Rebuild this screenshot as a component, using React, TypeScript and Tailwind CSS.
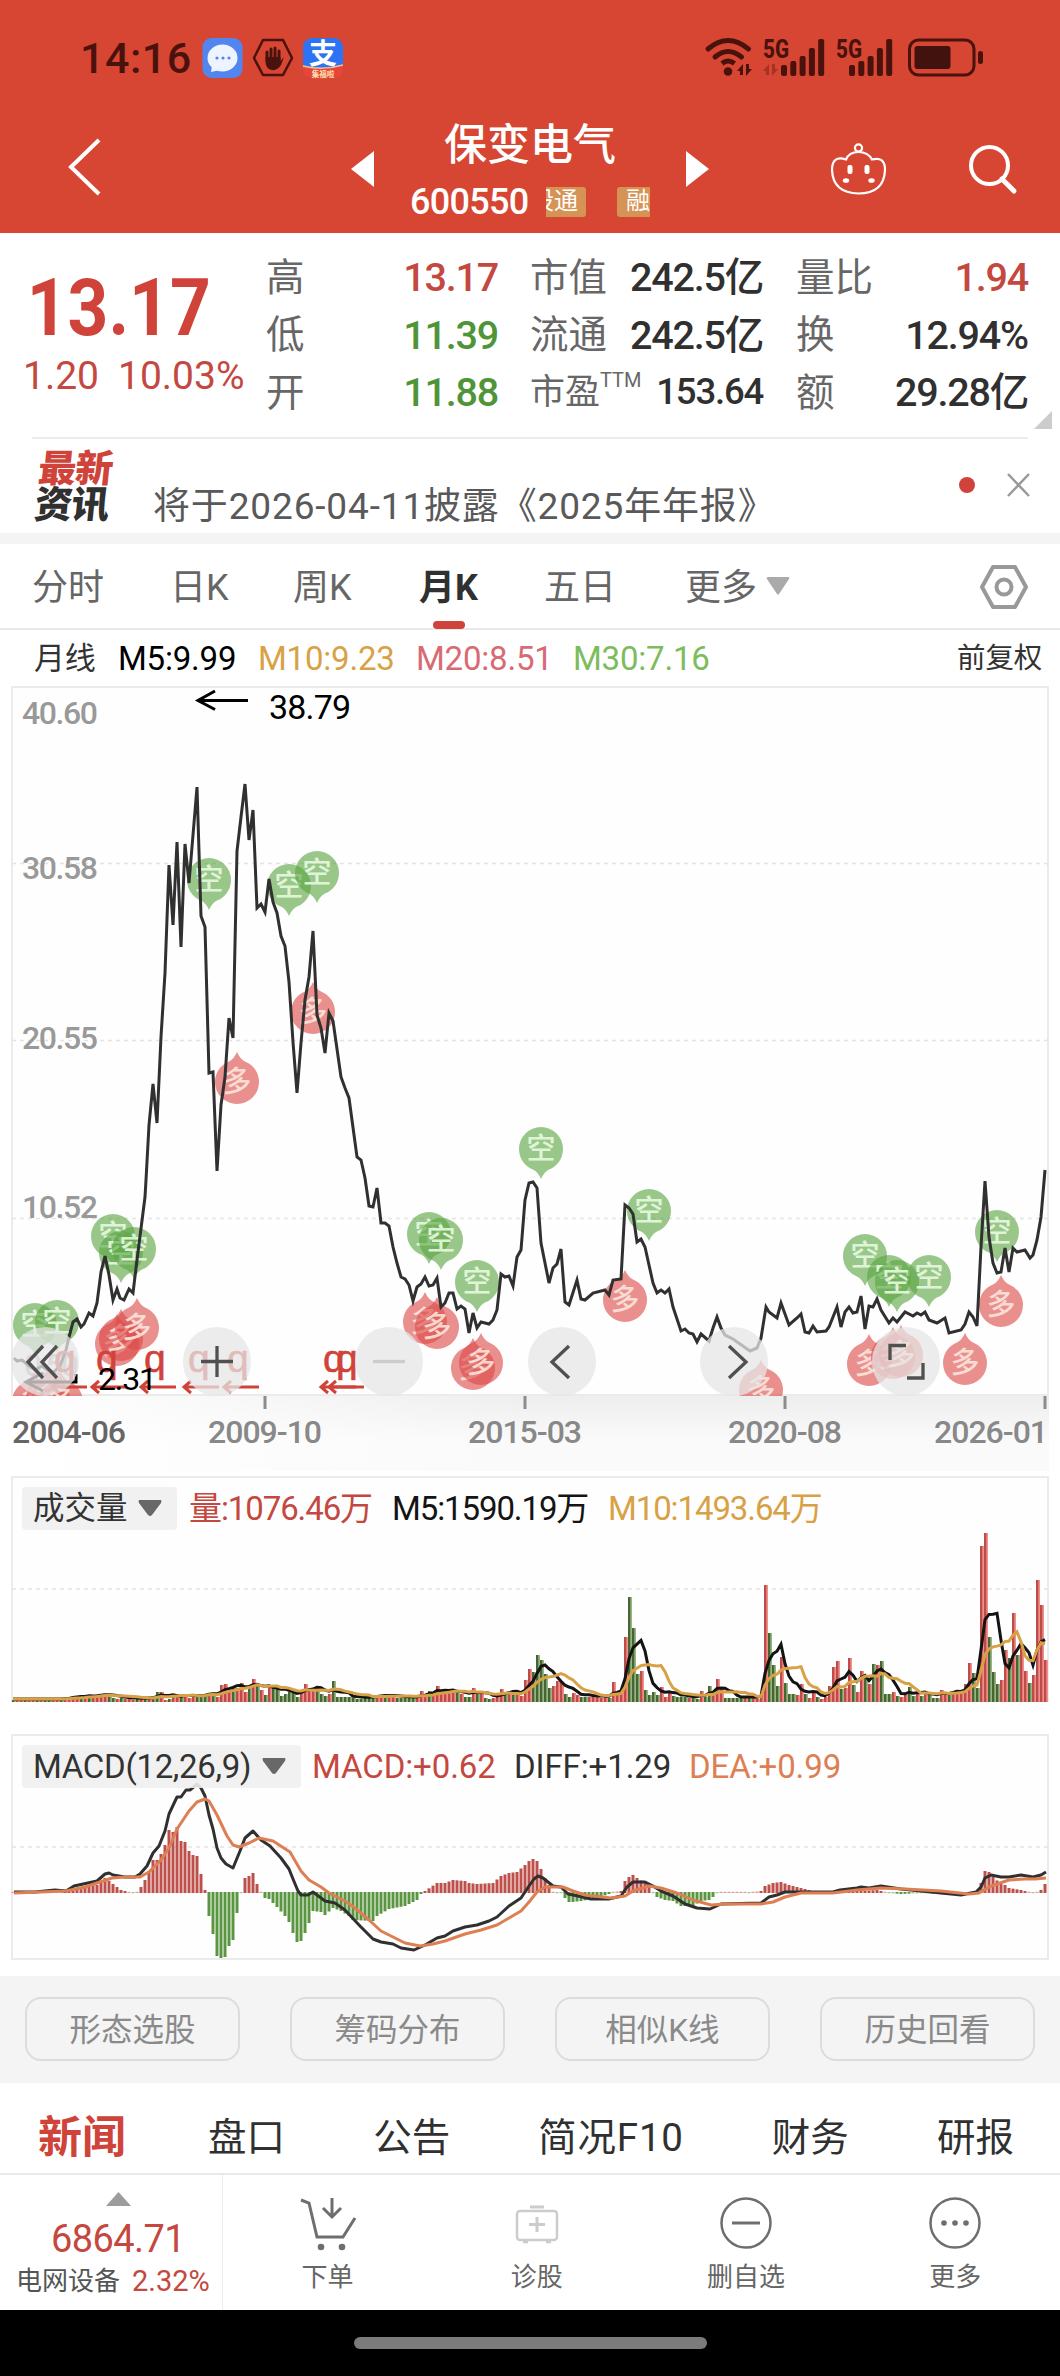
import { ReactNode } from "react"

type Point = [number, number]

// one month every 4px, the first one sits at x = 13
const monthX = (i: number) => 13 + i * 4

const toPoints = (list: number[]) => {
    const out: string[] = []
    for (let i = 0; i < list.length; i += 2) out.push(`${list[i]},${list[i + 1]}`)
    return out.join(" ")
}

const price = [
    14, 1358, 17, 1361, 22, 1360, 29, 1366, 35, 1370, 42, 1366, 47, 1370, 54, 1372, 60, 1366, 66, 1350, 69, 1337, 73, 1322, 77, 1319,
    81, 1327, 84, 1324, 89, 1313, 93, 1316, 97, 1303, 101, 1272, 105, 1256, 109, 1275, 113, 1300, 117, 1289, 120, 1298, 124, 1300,
    129, 1289, 133, 1293, 137, 1260, 145, 1197, 146, 1180, 149, 1125, 153, 1084, 157, 1123, 161, 1037, 165, 973, 169, 865, 173, 925,
    177, 842, 181, 947, 185, 844, 189, 883, 197, 787, 201, 916, 205, 927, 209, 1073, 213, 1072, 217, 1171, 221, 1105, 225, 1077,
    229, 1018, 233, 1038, 237, 851, 241, 817, 245, 784, 249, 840, 253, 810, 257, 908, 261, 904, 265, 912, 269, 879, 273, 902,
    277, 913, 281, 936, 285, 946, 289, 982, 293, 1042, 297, 1093, 301, 1043, 305, 1000, 309, 977, 313, 931, 317, 1015, 321, 1028,
    325, 1053, 329, 1013, 333, 1021, 341, 1077, 345, 1088, 349, 1098, 357, 1157, 361, 1160, 365, 1178, 369, 1206, 373, 1207,
    377, 1188, 381, 1223, 385, 1223, 389, 1226, 393, 1247, 397, 1263, 401, 1277, 405, 1279, 409, 1285, 413, 1301, 417, 1287,
    421, 1284, 425, 1277, 429, 1286, 433, 1285, 437, 1278, 441, 1307, 445, 1303, 449, 1293, 453, 1293, 457, 1309, 461, 1306,
    465, 1309, 469, 1333, 473, 1313, 477, 1328, 481, 1322, 489, 1324, 493, 1320, 497, 1310, 501, 1274, 505, 1277, 509, 1276,
    513, 1286, 517, 1257, 521, 1250, 525, 1200, 529, 1183, 533, 1182, 537, 1188, 541, 1243, 549, 1283, 553, 1268, 557, 1264,
    561, 1249, 565, 1302, 569, 1305, 577, 1280, 581, 1299, 585, 1300, 593, 1293, 605, 1290, 609, 1295, 613, 1280, 621, 1279,
    625, 1205, 629, 1208, 633, 1214, 637, 1242, 641, 1239, 645, 1247, 653, 1283, 657, 1293, 661, 1290, 665, 1293, 669, 1289,
    673, 1307, 681, 1331, 685, 1329, 689, 1333, 693, 1334, 697, 1342, 701, 1334, 709, 1341, 713, 1328, 717, 1317, 721, 1328,
    725, 1335, 733, 1339, 750, 1351, 757, 1348, 761, 1338, 766, 1307, 769, 1312, 777, 1318, 781, 1303, 789, 1325, 797, 1318,
    801, 1314, 805, 1332, 809, 1333, 813, 1326, 817, 1332, 826, 1331, 829, 1327, 837, 1307, 841, 1327, 845, 1312, 849, 1307,
    853, 1313, 857, 1312, 861, 1296, 865, 1329, 869, 1306, 873, 1307, 877, 1299, 881, 1310, 889, 1323, 893, 1318, 897, 1322,
    905, 1312, 913, 1316, 917, 1313, 921, 1315, 925, 1312, 929, 1320, 937, 1323, 945, 1318, 949, 1333, 961, 1330, 965, 1324,
    969, 1312, 973, 1317, 977, 1326, 981, 1247, 985, 1181, 989, 1237, 993, 1263, 997, 1273, 1001, 1272, 1005, 1248, 1009, 1272,
    1013, 1248, 1017, 1252, 1025, 1250, 1030, 1258, 1033, 1255, 1037, 1240, 1041, 1217, 1045, 1170,
]

const shortMarks: Point[] = [
    [35, 1325], [57, 1322], [113, 1236], [121, 1253], [134, 1249], [209, 880], [289, 886], [317, 873], [429, 1234], [441, 1240],
    [477, 1282], [541, 1149], [649, 1211], [865, 1256], [889, 1277], [897, 1282], [929, 1277], [997, 1232],
]

const longMarks: Point[] = [
    [34, 1402], [48, 1399], [61, 1402], [117, 1344], [121, 1339], [137, 1328], [237, 1082], [313, 1012], [425, 1322], [437, 1327],
    [473, 1368], [481, 1363], [625, 1300], [761, 1390], [869, 1364], [893, 1357], [901, 1355], [965, 1363], [1001, 1305],
]

const dividendMarks: Point[] = [[56, 51], [98, 91], [146, 140], [190, 183], [229, 223], [325, 320], [338, 328]]

// positive = up month, negative = down month
const volume = [
    -2, 2, 2, -2, 2, 2, -2, 2, -2, -2, 2, 2, -2, 4, 3, 6, 5, -4, 5, -6, 5, 6, 7, 7, -6, -4, 3, -4, 3, 3, 2, -3, 3, -4, 3,
    -3, -10, 10, 2, -3, 6, 6, -7, 5, 4, 6, -5, -8, -6, 9, -8, 5, 17, 18, 14, -14, 14, 19, 10, -15, 23, -17, 12, -7, 17, -15, -14,
    -6, -8, -10, -9, -5, 10, 18, 14, 13, -14, -8, -6, 8, -21, -5, -5, -5, -5, -4, -3, -3, -4, -5, -5, 5, 6, -6, 6, 5, -4, -4, -4,
    -4, -4, 4, 11, 6, -11, 8, 16, 10, 9, 9, 11, -10, 8, -5, -5, 14, -10, 8, -4, -3, 4, 6, 13, -10, 9, -9, 8, 6, 22, 33, -30,
    -47, -42, -28, -14, 16, 21, 20, -8, -5, 9, 7, -5, -5, 5, 6, 5, 4, 5, -4, 20, 10, 12, 65, -105, -74, -28, 31, -12, -7, -10,
    -7, 15, 5, 9, -6, -5, -5, -5, 4, -4, -3, 11, -5, -16, 8, 23, 13, -4, -4, -4, -4, -4, 4, -4, 4, 3, 10, 117, -69, -37, -16, 45,
    -19, -8, -8, 7, 18, -8, 4, 10, -5, 3, 5, 16, 35, 41, -13, 14, 44, -17, 10, 31, -26, 18, -38, 37, -41, -8, -8, 10, -6, 5, 7,
    -15, -6, 8, -6, 10, -7, -4, -4, 12, 10, -8, 9, 10, 11, 18, 39, -29, -14, 156, 169, -65, -30, -18, 22, 52, -44, 89, -47, 55,
    31, -19, 27, 122, 97, 42,
]

const average = (span: number) =>
    volume
        .map((_, i) => {
            const part = volume.slice(Math.max(0, i - span + 1), i + 1)
            const mean = part.reduce((sum, v) => sum + Math.abs(v), 0) / part.length
            return `${monthX(i)},${(1701 - mean).toFixed(1)}`
        })
        .join(" ")

const diff = [
    14, 1892, 35, 1892, 55, 1890, 66, 1891, 74, 1886, 97, 1881, 105, 1874, 109, 1873, 113, 1875, 125, 1877, 135, 1877, 140, 1874,
    147, 1866, 153, 1853, 159, 1846, 165, 1831, 169, 1814, 177, 1797, 181, 1797, 186, 1790, 190, 1790, 197, 1784, 201, 1788,
    205, 1796, 209, 1815, 213, 1829, 217, 1848, 221, 1858, 226, 1864, 233, 1868, 240, 1851, 245, 1838, 253, 1831, 261, 1840,
    270, 1846, 281, 1858, 289, 1869, 293, 1879, 298, 1891, 301, 1895, 308, 1895, 313, 1892, 325, 1901, 335, 1903, 345, 1910,
    360, 1926, 373, 1939, 381, 1942, 393, 1944, 401, 1948, 414, 1950, 425, 1945, 437, 1938, 445, 1936, 453, 1931, 465, 1927,
    477, 1925, 489, 1921, 497, 1917, 509, 1906, 521, 1898, 529, 1886, 534, 1879, 538, 1876, 543, 1878, 553, 1886, 561, 1887,
    568, 1894, 578, 1896, 591, 1899, 609, 1899, 621, 1896, 627, 1887, 633, 1882, 645, 1882, 653, 1886, 661, 1891, 673, 1896,
    685, 1904, 697, 1908, 710, 1909, 721, 1904, 761, 1903, 769, 1897, 777, 1895, 785, 1892, 809, 1892, 833, 1892, 840, 1890,
    857, 1888, 861, 1887, 869, 1888, 881, 1886, 901, 1889, 921, 1891, 941, 1893, 961, 1895, 976, 1892, 981, 1887, 985, 1878,
    991, 1875, 1001, 1877, 1009, 1877, 1021, 1875, 1033, 1877, 1041, 1875, 1046, 1872,
]

const dea = [
    14, 1893, 40, 1892, 66, 1891, 85, 1887, 97, 1883, 112, 1878, 125, 1877, 140, 1877, 149, 1872, 161, 1860, 169, 1848, 177, 1829,
    189, 1811, 197, 1802, 205, 1799, 209, 1801, 217, 1815, 227, 1836, 233, 1845, 239, 1847, 249, 1843, 259, 1838, 273, 1841,
    290, 1852, 301, 1871, 309, 1880, 321, 1887, 329, 1893, 345, 1901, 355, 1908, 369, 1920, 381, 1931, 393, 1937, 405, 1943,
    420, 1946, 433, 1944, 445, 1941, 465, 1934, 481, 1930, 497, 1925, 509, 1918, 521, 1911, 529, 1902, 537, 1892, 545, 1887,
    563, 1887, 573, 1891, 585, 1895, 611, 1898, 625, 1896, 633, 1891, 649, 1886, 661, 1888, 677, 1893, 693, 1900, 711, 1905,
    725, 1904, 761, 1904, 773, 1902, 785, 1897, 801, 1893, 833, 1893, 857, 1890, 881, 1888, 905, 1889, 941, 1891, 969, 1894,
    979, 1893, 989, 1887, 997, 1884, 1009, 1880, 1025, 1879, 1035, 1879, 1046, 1878,
]

// month index, bar height
const histogram = [
    0, 1, 12, 1, 16, 5, 20, 8, 21, 8, 23, 15, 25, 9, 27, 3, 29, 1, 30, -1, 31, 1, 32, 6, 33, 13, 34, 22, 35, 33, 36, 33, 37, 39,
    38, 48, 39, 63, 40, 61, 41, 66, 42, 52, 43, 51, 44, 42, 45, 38, 46, 37, 47, 19, 48, 3, 49, -24, 50, -42, 51, -64, 52, -66,
    53, -65, 54, -54, 55, -48, 56, -21, 57, -1, 58, 15, 59, 17, 60, 20, 61, 9, 62, 1, 63, -6, 64, -7, 66, -15, 68, -24, 69, -30,
    70, -41, 71, -50, 72, -49, 73, -41, 74, -31, 75, -19, 77, -20, 78, -23, 80, -16, 82, -19, 84, -24, 85, -28, 90, -29, 91, -24,
    94, -17, 98, -14, 101, -8, 102, -2, 103, 2, 106, 10, 108, 10, 110, 13, 113, 12, 114, 10, 116, 9, 120, 10, 122, 17, 124, 20,
    126, 21, 128, 28, 129, 32, 130, 34, 131, 32, 132, 24, 133, 15, 134, 8, 135, 1, 137, -1, 138, -6, 139, -10, 140, -10, 142, -9,
    145, -7, 149, -2, 150, 1, 152, 2, 153, 12, 154, 16, 155, 18, 156, 15, 158, 10, 159, 6, 160, -1, 161, -5, 163, -8, 165, -9,
    167, -14, 170, -14, 172, -9, 174, -8, 175, -5, 176, -1, 177, 1, 183, 1, 184, -1, 185, 1, 187, 2, 188, 7, 190, 10, 192, 11,
    194, 8, 197, 5, 200, 2, 212, 2, 216, 3, 218, 1, 219, -1, 222, -2, 228, -1, 235, -3, 238, -1, 239, 1, 241, 2, 242, 10, 243, 22,
    244, 21, 245, 16, 247, 9, 248, 8, 249, 5, 252, 3, 254, 1, 255, -1, 256, 1, 257, 3, 258, 9,
]

const histogramBars = (() => {
    const bars: number[] = []
    for (let k = 0; k < histogram.length - 2; k += 2) {
        const [a, ha, b, hb] = histogram.slice(k, k + 4)
        for (let i = a; i < b; i++) bars.push(ha + ((hb - ha) * (i - a)) / (b - a))
    }
    bars.push(9)
    return bars
})()

const Stat = ({ label, sup, value, tone = "text-[#303030]" }: { label: string; sup?: string; value: string; tone?: string }) => (
    <div className="flex h-[57.5px] items-center justify-between">
        <span className={`flex whitespace-nowrap text-[#676767] ${sup ? "text-[35px]" : "text-[38.500px]"}`}>
            {label}
            {sup && <sup className="top-0 mt-[3px] text-[20px] leading-none">{sup}</sup>}
        </span>
        <span className={`mr-[-1px] whitespace-nowrap font-medium tracking-[-1.2px] ${sup ? "text-[36.500px]" : "text-[39.500px]"} ${tone}`}>
            {value}
        </span>
    </div>
)

const Signal = ({ x }: { x: number }) => (
    <g>
        {[11, 15, 20, 28, 37].map((h, i) => (
            <rect key={h} x={x + i * 9.3} y={76 - h} width="6" height={h} rx="2" />
        ))}
    </g>
)

// small up / down pair beside the wifi and signal icons
const DataArrows = ({ x, opacity = 1 }: { x: number; opacity?: number }) => (
    <path d={`M${x} 71 L${x + 6} 64 V75 H${x + 3} V71z M${x + 15} 69 L${x + 9} 76 V64 H${x + 12} V69z`} fill="#4a120c" opacity={opacity} />
)

const StatusBar = () => (
    <div className="flex h-[100px] items-start pl-[80px] pt-[37px]">
        <span className="w-[122px] text-[43px] leading-[42px] font-medium tracking-[0.5px] text-[#4a120c]">14:16</span>
        <svg width="141" height="42" viewBox="202 37 141 42">
            <rect x="202.500" y="38" width="40" height="40" rx="9" fill="#5286ee" />
            <ellipse cx="222.500" cy="58" rx="15" ry="13.500" fill="#eef4ff" />
            <path d="M212 66 L211 72 L220 70z" fill="#eef4ff" />
            <g fill="#5286ee">
                <circle cx="217" cy="58" r="1.600" />
                <circle cx="223" cy="58" r="1.600" />
                <circle cx="229" cy="58" r="1.600" />
            </g>
            <path d="M263 40 H283 L292 58 L283 75 H263 L254 58z" fill="none" stroke="#4a120c" strokeWidth="2.500" strokeLinejoin="round" />
            <path
                d="M267 60 V52 M271 60 V49 M275 60 V48 M279 60 V51"
                stroke="#4a120c"
                strokeWidth="3"
                strokeLinecap="round"
            />
            <path d="M265.500 57 H280.500 V61 L284 57 L281 65 Q277 71 272 70 Q266 69 265.500 62z" fill="#4a120c" />
            <rect x="303" y="38" width="40" height="40" rx="9" fill="#2d74f4" />
            <path d="M303 66 Q323 71 343 65 V69 Q343 78 334 78 H312 Q303 78 303 69z" fill="#e8443a" />
            <path d="M303 66 Q323 71 343 65" fill="none" stroke="#f3c48c" strokeWidth="1.500" />
            <text x="323" y="64" textAnchor="middle" fontSize="28" fontWeight="700" fill="#fff">支</text>
            <text x="323" y="76.500" textAnchor="middle" fontSize="7.500" fontWeight="700" fill="#ffe3b0">集福啦</text>
        </svg>
        <svg className="ml-[359px] overflow-visible" width="290" height="42" viewBox="702 37 290 42" fill="#4a120c">
            <g fill="none" stroke="#4a120c" strokeWidth="5" strokeLinecap="round">
                <path d="M708 49 Q728 32 748.500 49" />
                <path d="M715 57 Q728 46 741.500 57" />
                <path d="M722 63.500 Q728 58.500 734.500 63.500" strokeLinecap="butt" />
            </g>
            <circle cx="728" cy="71.500" r="4.300" />
            <DataArrows x={737} />
            <DataArrows x={763} opacity={0.35} />
            <text x="763" y="57.500" fontSize="26" fontWeight="800" textLength="26" lengthAdjust="spacingAndGlyphs">5G</text>
            <Signal x={781} />
            <text x="836" y="57.500" fontSize="26" fontWeight="800" textLength="26" lengthAdjust="spacingAndGlyphs">5G</text>
            <Signal x={849} />
            <rect x="909.500" y="40" width="64.500" height="35" rx="9" fill="none" stroke="#4a120c" strokeWidth="3" />
            <rect x="914.500" y="46" width="36" height="23" rx="3" fill="#42120e" />
            <rect x="978" y="51" width="5" height="13" rx="2.500" />
        </svg>
    </div>
)

const Header = () => (
    <header className="h-[233px] bg-[#d64632] text-white">
        <StatusBar />
        <div className="flex">
            <svg className="ml-[62px] mt-[34px]" width="45" height="66" viewBox="62 134 45 66" fill="none" stroke="#fff" strokeWidth="4">
                <path d="M99 140 L71 167 L99 194" />
            </svg>
            <svg className="ml-[244px] mt-[51px]" width="23" height="36" viewBox="0 0 23 36">
                <path d="M23 0 V36 L0 18z" fill="#fff" />
            </svg>
            <div className="mt-[20px] flex w-[312px] flex-col items-center">
                <h1 className="text-[43px] leading-[50px] font-medium">保变电气</h1>
                <div className="mt-[15px] flex w-[240px] items-center justify-between">
                    <span className="text-[36px] leading-[34px] font-medium tracking-[-0.7px]">600550</span>
                    <div className="flex h-[30px] w-[104px] justify-between overflow-hidden text-[24px] leading-[29px]">
                        <span className="flex w-[40px] justify-end overflow-hidden rounded-r-[3px] bg-[#d59355] pr-[8px] whitespace-nowrap">
                            股通
                        </span>
                        <span className="w-[33px] overflow-hidden rounded-l-[3px] bg-[#d59355] pl-[9px] whitespace-nowrap">融</span>
                    </div>
                </div>
            </div>
            <svg className="mt-[51px]" width="23" height="36" viewBox="0 0 23 36">
                <path d="M0 0 V36 L23 18z" fill="#fff" />
            </svg>
            <svg className="ml-[119px] mt-[40px]" width="62" height="58" viewBox="828 140 62 58" fill="none" stroke="#fff" strokeWidth="2.200">
                <circle cx="858.500" cy="148" r="3.600" />
                <path d="M846 159.500 Q849 152 858.500 152 Q868 152 872 159.500 Q885 156 885 170 Q884 193.500 858.500 193.500 Q833 193 832 170 Q832 155 846 159.500z" />
                <g fill="#fff" stroke="none">
                    <rect x="847.500" y="165" width="5" height="9" rx="2" />
                    <rect x="864.500" y="165" width="5" height="9" rx="2" />
                    <ellipse cx="846" cy="180.500" rx="3.200" ry="2.300" />
                    <ellipse cx="871.500" cy="180.500" rx="3.200" ry="2.300" />
                </g>
            </svg>
            <svg className="ml-[74px] mt-[40px]" width="60" height="60" viewBox="964 140 60 60" fill="none" stroke="#fff" strokeWidth="4">
                <circle cx="989.500" cy="165.500" r="18.500" />
                <path d="M1002 179 L1014 191" strokeWidth="5" strokeLinecap="round" />
            </svg>
        </div>
    </header>
)

const Quote = () => (
    <section className="relative flex h-[204px]">
        <div className="w-[266px]">
            <p className="w-[210px] origin-left scale-x-[0.89] pt-[35px] pl-[30px] text-[80px] leading-[80px] font-bold text-[#d0433a]">13.17</p>
            <div className="mt-[5px] flex pl-[23px] text-[39px] leading-[46px] text-[#c4483f]">
                <span className="w-[95px]">1.20</span>
                <span>10.03%</span>
            </div>
        </div>
        <div className="w-[231px] pt-[16px]">
            <Stat label="高" value="13.17" tone="text-[#c4483f]" />
            <Stat label="低" value="11.39" tone="text-[#4e9438]" />
            <Stat label="开" value="11.88" tone="text-[#4e9438]" />
        </div>
        <div className="ml-[33px] w-[232px] pt-[16px]">
            <Stat label="市值" value="242.5亿" />
            <Stat label="流通" value="242.5亿" />
            <Stat label="市盈" sup="TTM" value="153.64" />
        </div>
        <div className="ml-[34px] w-[231px] pt-[16px]">
            <Stat label="量比" value="1.94" tone="text-[#c4483f]" />
            <Stat label="换" value="12.94%" />
            <Stat label="额" value="29.28亿" />
        </div>
        <svg className="absolute right-[8px] bottom-[8px]" width="18" height="18">
            <path d="M18 0 V18 H0z" fill="#ccc" />
        </svg>
    </section>
)

const News = () => (
    <section className="mx-[32px] flex h-[96px] border-t-2 border-[#ececec]">
        <div className="ml-[4px] mt-[12px] -skew-x-6 text-[38px] leading-[36px] font-black tracking-[-1px]">
            <p className="text-[#d0433a]">最新</p>
            <p className="text-[#303030]">资讯</p>
        </div>
        <p className="ml-[43px] mt-[40px] w-[700px] text-[37px] leading-[56px] tracking-[0.85px] whitespace-nowrap text-[#595959]">
            将于2026-04-11披露《2025年年报》
        </p>
        <span className="ml-auto mt-[38px] h-[16px] w-[16px] rounded-full bg-[#d0433a]" />
        <svg className="ml-[32px] mr-[-2px] mt-[34px]" width="23" height="24" stroke="#999" strokeWidth="2.500">
            <path d="M1 1 L22 23 M22 1 L1 23" />
        </svg>
    </section>
)

const PeriodTabs = () => (
    <nav className="relative flex h-[86px] items-center border-b-2 border-[#e9e9e9] pt-[4px] pl-[32px] text-[36px] text-[#666]">
        <span className="w-[138px]">分时</span>
        <span className="w-[123px]">日K</span>
        <span className="w-[126px]">周K</span>
        <span className="w-[125px] font-bold text-[#303030]">月K</span>
        <span className="w-[141px]">五日</span>
        <span className="w-[81px]">更多</span>
        <svg className="mb-[4px]" width="24" height="20">
            <path d="M2 1 H22 Q24 1 23 3 L13 18 Q12 19 11 18 L1 3 Q0 1 2 1z" fill="#aaa" />
        </svg>
        <svg className="ml-auto mr-[31px] mb-[2px]" width="50" height="48" viewBox="0 0 50 48" fill="none" stroke="#999" strokeWidth="4">
            <path d="M14 4 H36 L47 24 L36 44 H14 L3 24z" strokeLinejoin="round" />
            <circle cx="25" cy="24" r="7.500" />
        </svg>
        <span className="absolute bottom-[-1px] left-[433px] h-[8px] w-[32px] rounded-[4px] bg-[#d0433a]" />
    </nav>
)

const Frame = ({ y, h, open }: { y: number; h: number; open?: boolean }) => (
    <path d={open ? `M12 ${y + h} V${y} H1048 V${y + h}` : `M12 ${y} H1048 V${y + h} H12z`} fill="none" stroke="#ebebeb" strokeWidth="2" />
)

const GridLine = ({ y }: { y: number }) => <path d={`M12 ${y} H1048`} stroke="#e4e4e4" strokeWidth="1.500" strokeDasharray="4 4" />

const Mark = ({ at: [x, y], kind }: { at: Point; kind: "空" | "多" }) => (
    <g transform={`translate(${x} ${y})`}>
        <g fill={kind === "空" ? "#5ba442" : "#dc4a48"} fillOpacity="0.62">
            <path
                d="M22 0 A22 22 0 1 0 -22 0 A22 22 0 0 0 -8 20.500 Q-3 23 0 30 Q3 23 8 20.500 A22 22 0 0 0 22 0z"
                transform={kind === "多" ? "scale(1 -1)" : undefined}
            />
        </g>
        <text y="10" textAnchor="middle" fontSize="29" fontWeight="500" fill={kind === "空" ? "#eafbe2" : "#fbe6dc"} fillOpacity="0.9">
            {kind}
        </text>
    </g>
)

const controlIcons: ReactNode[] = [
    <path d="M32 19 L17 35 L32 51 M46 19 L31 35 L46 51" />,
    <path d="M34 19 V50 M18 34.500 H50" />,
    <path d="M18 34.500 H50" stroke="#ccc" />,
    <path d="M41 19 L24 35 L41 51" />,
    <path d="M29 19 L46 35 L29 51" />,
    <path d="M34 18.500 H18 V33 M51 36 V51 H35" />,
]

const dates: [string, number][] = [["2004-06", 12], ["2009-10", 208], ["2015-03", 468], ["2020-08", 728], ["2026-01", 934]]

const PriceChart = () => (
    <section>
        <div className="flex h-[50px] items-end pl-[34px] pr-[18px] text-[33px] leading-[42px] tracking-[-0.2px] whitespace-nowrap">
            <span className="w-[84px] text-[31px] text-[#333]">月线</span>
            <span className="w-[140px] text-black">M5:9.99</span>
            <span className="w-[158px] text-[#d8a145]">M10:9.23</span>
            <span className="w-[157px] text-[#d86a74]">M20:8.51</span>
            <span className="text-[#7cbc5c]">M30:7.16</span>
            <span className="ml-auto text-[28.500px] text-[#333]">前复权</span>
        </div>
        <div className="relative">
            <svg className="block" width="1060" height="795" viewBox="0 680 1060 795">
                <defs>
                    <linearGradient id="axis" x1="0" y1="0" x2="0" y2="1">
                        <stop offset="0" stopColor="#eeeeee" />
                        <stop offset="0.6" stopColor="#fafafa" />
                        <stop offset="1" stopColor="#fafafa" />
                    </linearGradient>
                    <linearGradient id="fade" x1="0" y1="0" x2="1" y2="0">
                        <stop offset="0" stopColor="#fff" />
                        <stop offset="0.5" stopColor="#fff" stopOpacity="0" />
                    </linearGradient>
                    <clipPath id="plot">
                        <rect x="12" y="686" width="1037" height="710" />
                    </clipPath>
                </defs>
                <rect x="12" y="1396" width="1037" height="75" fill="url(#axis)" />
                <rect x="12" y="1396" width="1037" height="75" fill="url(#fade)" />
                <rect x="12" y="687" width="1036" height="708" fill="#fefefe" />
                <Frame y={687} h={708} />
                <GridLine y={863.5} />
                <GridLine y={1040.5} />
                <GridLine y={1218.5} />
                {[265, 525, 785, 1045].map((x) => (
                    <rect key={x} x={x - 1.5} y="1396" width="3" height="13" fill="#8c8c8c" />
                ))}
                <g fontSize="32" fontWeight="500" fill="#999">
                    <text x="22" y="724" textLength="76">40.60</text>
                    <text x="22" y="879" textLength="76">30.58</text>
                    <text x="22" y="1049" textLength="76">20.55</text>
                    <text x="22" y="1218" textLength="76">10.52</text>
                    <text x="24" y="1376" textLength="55" fill="#bbb">0.50</text>
                    {dates.map(([date, x]) => (
                        <text key={date} x={x} y="1443" textLength="114" fill={x < 100 ? "#666" : "#888"}>{date}</text>
                    ))}
                </g>
                <g clipPath="url(#plot)">
                    {shortMarks.map((at, i) => <Mark key={i} at={at} kind="空" />)}
                    {longMarks.map((at, i) => <Mark key={i} at={at} kind="多" />)}
                    <polyline points={toPoints(price)} fill="none" stroke="#303030" strokeWidth="3" />
                    {dividendMarks.map(([textX, arrowX]) => (
                        <g key={textX}>
                            <text x={textX - 2} y="1372" fontSize="39" className="font-['Liberation_Sans']" fill="#d0433a" stroke="#d0433a" strokeWidth="0.600">q</text>
                            <path d={`M${arrowX + 36} 1387 H${arrowX + 1} M${arrowX + 8} 1381 L${arrowX + 1} 1387 L${arrowX + 8} 1393`} fill="none" stroke="#d0433a" strokeWidth="3" />
                        </g>
                    ))}
                </g>
                <g fill="none" stroke="#000" strokeWidth="3">
                    <path d="M248 700.500 H198 M215 691 L198 700.500 L215 709.500" />
                    <path d="M76 1374 V1382 H26 M43 1373 L26 1382 L43 1391" />
                </g>
                <text x="269" y="719" fontSize="34" textLength="82">38.79</text>
                <text x="98" y="1390" fontSize="32" textLength="59">2.31</text>
            </svg>
            {/* floating zoom / pan buttons */}
            <div className="absolute top-[647px] left-[11px] flex w-[929px] justify-between">
                {controlIcons.map((icon, i) => (
                    <button key={i} className="h-[69px] w-[68px] rounded-full bg-[#e6e6e6]/75">
                        <svg width="68" height="69" fill="none" stroke="#505050" strokeWidth="3.300">{icon}</svg>
                    </button>
                ))}
            </div>
        </div>
    </section>
)

const Picker = ({ children, className }: { children: ReactNode; className: string }) => (
    <button className={`flex h-[43px] items-center justify-between rounded-[4px] bg-[#efefef]/90 pl-[11px] pr-[15px] whitespace-nowrap text-[#333] ${className}`}>
        {children}
        <svg width="24" height="17">
            <path d="M1 0 H23 Q24 1 23 3 L14 15 Q12 17 10 15 L1 3 Q0 1 1 0z" fill="#686868" />
        </svg>
    </button>
)

const VolumeChart = () => (
    <section className="relative">
        <svg className="block" width="1060" height="245" viewBox="0 1475 1060 245">
            <rect x="12" y="1477" width="1036" height="225" fill="#fefefe" />
            <Frame y={1477} h={225} open />
            <GridLine y={1589} />
            {volume.map((v, i) => {
                const h = Math.abs(v)
                return (
                    <g key={i}>
                        <rect x={monthX(i) - 1} y={1702 - h} width="4" height={h} fill={v > 0 ? "#f08f8b" : "#98b384"} />
                        <rect x={monthX(i) - 1} y={1702 - h} width="2.300" height={h} fill={v > 0 ? "#bd4c46" : "#456631"} />
                    </g>
                )
            })}
            <polyline points={average(5)} fill="none" stroke="#141414" strokeWidth="3" />
            <polyline points={average(10)} fill="none" stroke="#d8a145" strokeWidth="3" />
        </svg>
        <div className="absolute top-[12px] left-[22px] flex items-center text-[33px] leading-[43px] tracking-[-1.1px] whitespace-nowrap">
            <Picker className="w-[155px] text-[31.500px] tracking-normal">成交量</Picker>
            <span className="ml-[12px] w-[203px] text-[#c4483f]">量:1076.46万</span>
            <span className="w-[216px] text-[#141414]">M5:1590.19万</span>
            <span className="text-[#d8a145]">M10:1493.64万</span>
        </div>
    </section>
)

const MacdChart = () => (
    <section className="relative">
        <svg className="block" width="1060" height="256" viewBox="0 1720 1060 256">
            <rect x="12" y="1735" width="1036" height="224" fill="#fefefe" />
            <Frame y={1735} h={224} />
            <GridLine y={1847} />
            {histogramBars.map((h, i) => {
                const size = Math.max(Math.abs(h), 1.2)
                return (
                    <rect
                        key={i}
                        x={monthX(i) - 1.5}
                        y={h > 0 ? 1893 - size : 1892}
                        width="3"
                        height={size}
                        fill={h > 0 ? "#bd504a" : "#5a9640"}
                        fillOpacity={Math.abs(h) > 1.5 ? 1 : 0.55}
                    />
                )
            })}
            <polyline points={toPoints(diff)} fill="none" stroke="#303030" strokeWidth="3" strokeLinejoin="round" />
            <polyline points={toPoints(dea)} fill="none" stroke="#de7f53" strokeWidth="3" strokeLinejoin="round" />
        </svg>
        <div className="absolute top-[25px] left-[22px] flex items-center text-[33px] leading-[43px] tracking-[-0.1px] whitespace-nowrap">
            <Picker className="w-[279px] tracking-[-0.3px]">MACD(12,26,9)</Picker>
            <span className="ml-[11px] w-[202px] text-[#c4483f]">MACD:+0.62</span>
            <span className="w-[175px] text-[#303030]">DIFF:+1.29</span>
            <span className="text-[#de7f53]">DEA:+0.99</span>
        </div>
    </section>
)

const Tools = () => (
    <section className="flex h-[107px] justify-between bg-[#f4f4f4] px-[25px] pt-[21px]">
        {["形态选股", "筹码分布", "相似K线", "历史回看"].map((name) => (
            <button key={name} className="h-[64px] w-[215px] rounded-[16px] border-[2.500px] border-[#dcdcdc] pt-[3px] text-[31.500px] text-[#8a8a8a]">
                {name}
            </button>
        ))}
    </section>
)

const InfoTabs = () => (
    <nav className="flex h-[92px] items-center justify-between border-b-2 border-[#e9e9e9] pt-[19px] pl-[38px] pr-[46px] text-[38.500px] text-[#303030]">
        <span className="mr-[-6px] text-[44px] font-bold text-[#d0433a]">新闻</span>
        <span>盘口</span>
        <span>公告</span>
        <span className="tracking-[0.8px]">简况F10</span>
        <span>财务</span>
        <span>研报</span>
    </nav>
)

const Action = ({ label, children }: { label: string; children: ReactNode }) => (
    <div className="flex flex-1 flex-col items-center pt-[20px] text-[26px] leading-[40px] text-[#666]">
        <svg width="60" height="56" viewBox="-30 -28 60 56" fill="none" stroke="#6e6e6e" strokeWidth="2.500">{children}</svg>
        <span className="mt-[6px]">{label}</span>
    </div>
)

const BottomBar = () => (
    <footer>
        <div className="flex h-[135px]">
            <div className="flex w-[223px] flex-col border-r border-[#ececec]">
                <svg className="mt-[17px] ml-[106px]" width="25" height="14">
                    <path d="M12.500 0 L25 14 H0z" fill="#9c9c9c" />
                </svg>
                <p className="mt-[10px] pl-[51px] text-[38px] leading-[46px] tracking-[-0.6px] text-[#c4483f]">6864.71</p>
                <p className="mt-[1px] flex items-center pl-[16px] text-[26px] leading-[36px] whitespace-nowrap text-[#555]">
                    电网设备<span className="ml-[12px] text-[29px] text-[#c4483f]">2.32%</span>
                </p>
            </div>
            <Action label="下单">
                <path d="M-27 -23 L-19 -20 L-11 14 H15 L27 -5" strokeWidth="3" />
                <path d="M4 -25 V-8 M-5 -15 L4 -6 L13 -15" strokeWidth="3" />
                <g fill="#6e6e6e" stroke="none">
                    <circle cx="-7" cy="24" r="3.300" />
                    <circle cx="14" cy="24" r="3.300" />
                </g>
            </Action>
            <Action label="诊股">
                <g stroke="#ccc">
                    <rect x="-20" y="-12" width="40" height="29" rx="3" />
                    <path d="M-7 -16 H7 M0 -6 V9 M-8 1.500 H8" strokeWidth="3" />
                    <path d="M-14 19 H-9 M9 19 H14" />
                </g>
            </Action>
            <Action label="删自选">
                <circle r="24.500" />
                <path d="M-14 0 H14" strokeWidth="3" />
            </Action>
            <Action label="更多">
                <circle r="24.500" />
                <g fill="#6e6e6e" stroke="none">
                    <circle cx="-11" r="2.800" />
                    <circle r="2.800" />
                    <circle cx="11" r="2.800" />
                </g>
            </Action>
        </div>
        <div className="flex h-[66px] justify-center bg-black pt-[27px]">
            <span className="h-[12px] w-[353px] rounded-full bg-[#7b7b7b]" />
        </div>
    </footer>
)

export default function App() {
    return (
        <main className="h-[2376px] w-[1060px] overflow-hidden bg-white font-[Roboto,'Noto_Sans_CJK_SC',sans-serif]">
            <Header />
            <Quote />
            <News />
            <div className="h-[11px] bg-[#f4f4f4]" />
            <PeriodTabs />
            <PriceChart />
            <VolumeChart />
            <MacdChart />
            <Tools />
            <InfoTabs />
            <BottomBar />
        </main>
    )
}
